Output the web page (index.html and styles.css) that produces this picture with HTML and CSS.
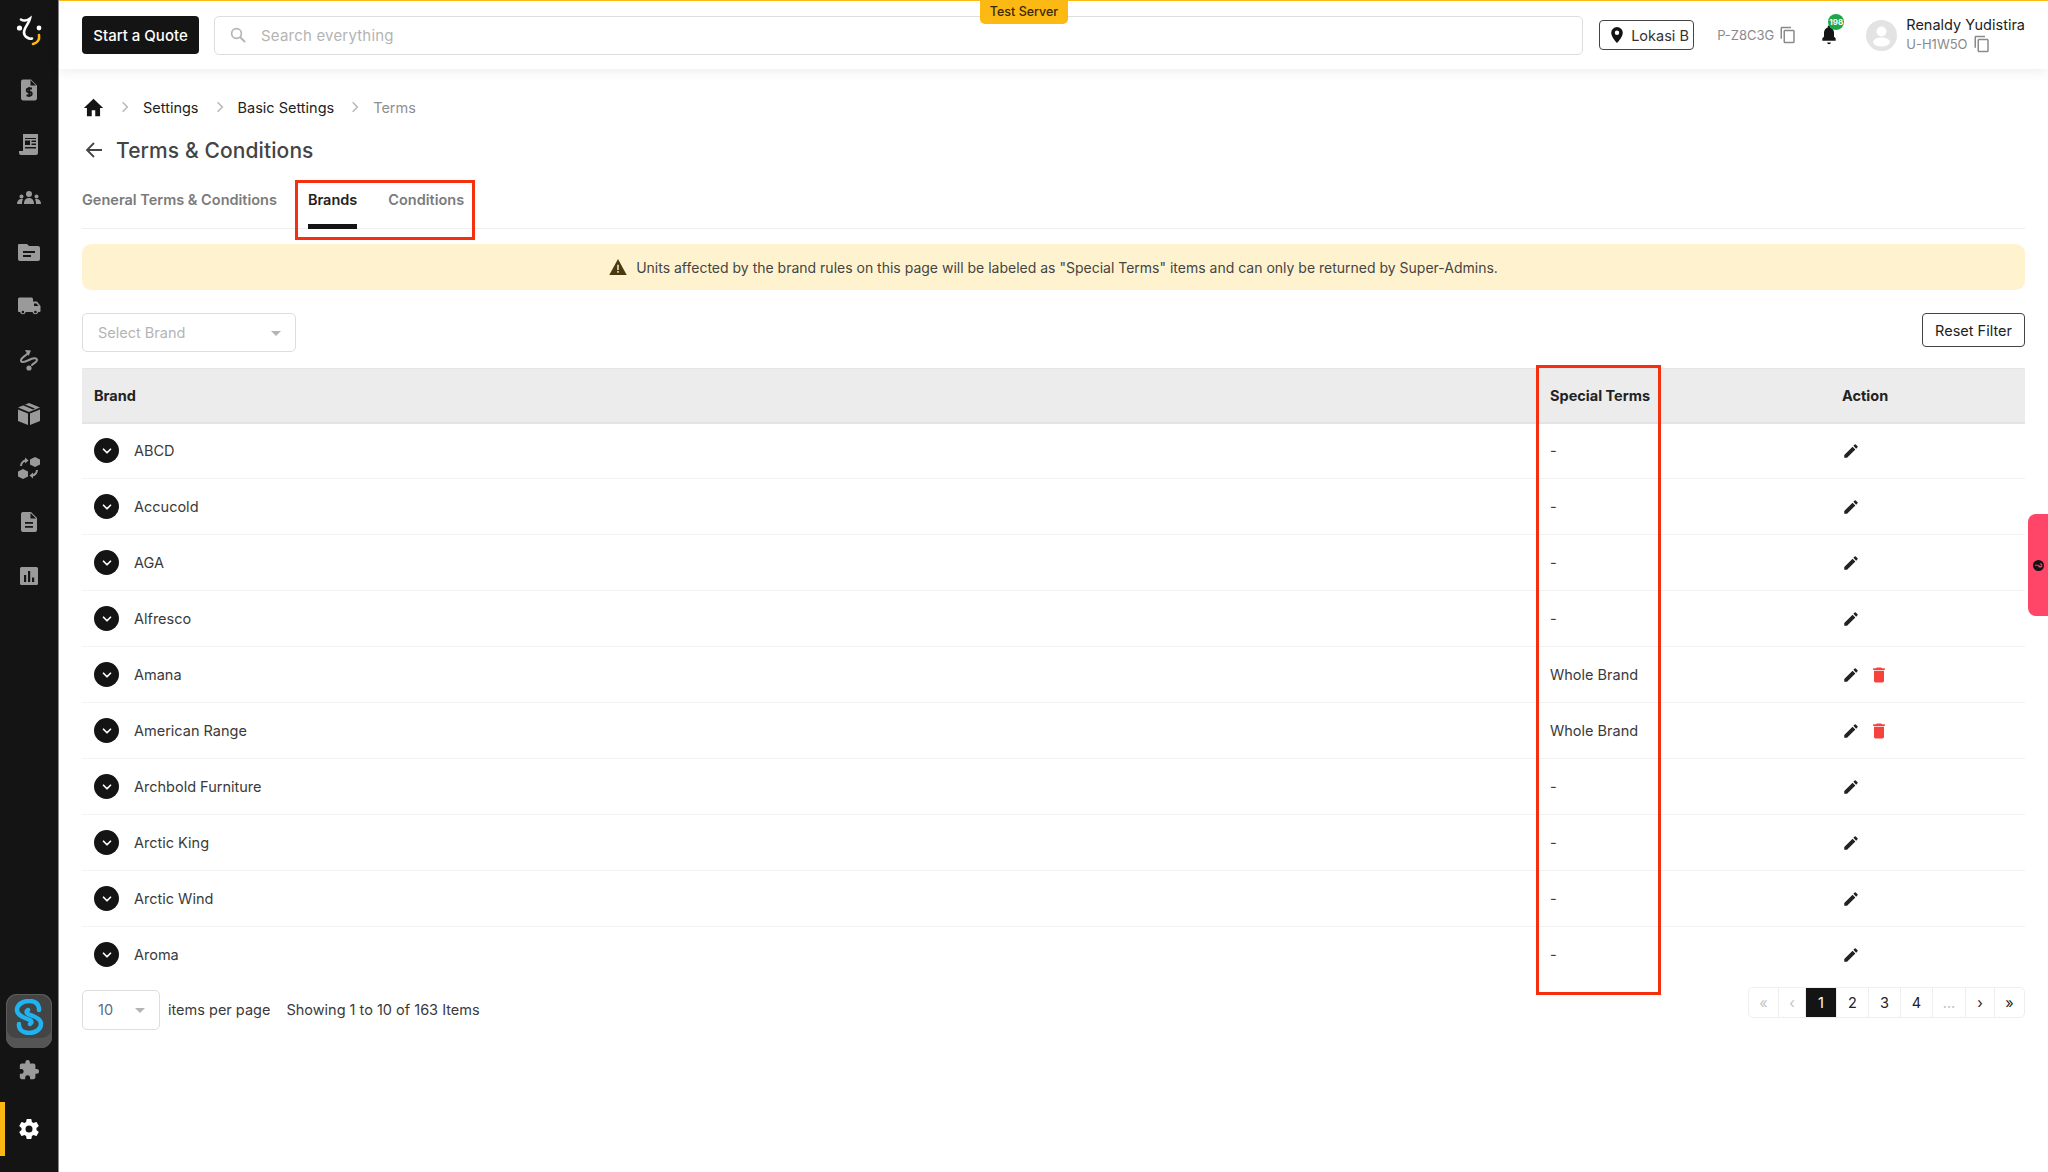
FILE: index.html
```html
<!DOCTYPE html>
<html lang="en">
<head>
    <meta charset="UTF-8">
    <meta name="viewport" content="width=device-width, initial-scale=1.0">
    <title>Terms &amp; Conditions</title>
    <link rel="stylesheet" href="styles.css">
</head>
<body>
    <svg class="sprites" width="0" height="0">
        <symbol id="i-copy" viewBox="0 0 24 24"><path fill="currentColor" d="M16 1H4c-1.1 0-2 .9-2 2v14h2V3h12V1zm3 4H8c-1.1 0-2 .9-2 2v14c0 1.1.9 2 2 2h11c1.1 0 2-.9 2-2V7c0-1.1-.9-2-2-2zm0 16H8V7h11v14z"/></symbol>
        <symbol id="i-pencil" viewBox="0 0 24 24"><path fill="currentColor" d="M3 17.25V21h3.75L17.81 9.94l-3.75-3.75L3 17.25zM20.71 7.04a1 1 0 0 0 0-1.41l-2.34-2.34a1 1 0 0 0-1.41 0l-1.83 1.83 3.75 3.75 1.83-1.83z"/></symbol>
        <symbol id="i-trash" viewBox="0 0 24 24"><path fill="currentColor" d="M6 19c0 1.1.9 2 2 2h8c1.1 0 2-.9 2-2V7H6v12zM19 4h-3.5l-1-1h-5l-1 1H5v2h14V4z"/></symbol>
        <symbol id="i-chev" viewBox="0 0 24 24"><path fill="none" stroke="currentColor" stroke-width="3" stroke-linecap="round" stroke-linejoin="round" d="M6 9l6 6 6-6"/></symbol>
        <symbol id="i-crumb" viewBox="0 0 24 24"><path fill="none" stroke="currentColor" stroke-width="2.4" d="M8 4l8 8-8 8"/></symbol>
    </svg>

    <div class="app">
        <!-- Sidebar -->
        <aside class="sidebar">
            <div class="side-top">
                <div class="side-item logo">
                    <svg width="28" height="34" viewBox="0 0 28 34">
                        <circle cx="4.5" cy="13" r="2.6" fill="#fff"/>
                        <circle cx="24" cy="13" r="2.4" fill="#fff"/>
                        <path d="M6 4.5c3 2 7 .5 9-1-1 5-6 9-6 14 0 4 5 7 8 6" fill="none" stroke="#fff" stroke-width="2.6" stroke-linecap="round"/>
                        <path d="M24 20c1 5-2 8-6 9" fill="none" stroke="#fdb913" stroke-width="2.6" stroke-linecap="round"/>
                    </svg>
                </div>
                <div class="side-item"><svg width="24" height="24" viewBox="0 0 24 24"><path fill="#9a9a9a" d="M6 1.5h8l6 6V20a2.5 2.5 0 0 1-2.5 2.5h-11A2.500 2.500 0 0 1 4 20V3.500a2 2 0 0 1 2-2z"/><path fill="none" stroke="#141414" stroke-width="1.8" d="M15 10.500h-3.500a1.700 1.700 0 0 0 0 3.500h1.500a1.700 1.700 0 0 1 0 3.500H9.500M12.200 9v10"/><path fill="#141414" d="M13.500 2l5.500 5.500h-5.500z"/></svg></div>
                <div class="side-item"><svg width="24" height="24" viewBox="0 0 24 24"><path fill="#9a9a9a" d="M6 2h15v19a2 2 0 0 1-2 2H4a2 2 0 0 1-2-2v-2h4z"/><path fill="#141414" d="M8 6h11v1H8zM8 8.500h5V13H8zM14.500 8.500H19V10h-4.500zM14.500 11.500H19V13h-4.500zM8 15h11v1.500H8z"/></svg></div>
                <div class="side-item"><svg width="24" height="24" viewBox="0 0 24 24"><g fill="#9a9a9a"><circle cx="12" cy="8" r="3"/><circle cx="4.500" cy="10.500" r="2"/><circle cx="19.500" cy="10.500" r="2"/><path d="M7 18c0-4 2-6 5-6s5 2 5 6zM0 18c0-3 1.500-5 4.500-5 .8 0 1 .1 1.500.3C5.300 14.500 5 16 5 18zM24 18c0-3-1.500-5-4.500-5-.8 0-1 .1-1.500.3.700 1.200 1 2.700 1 4.700z"/></g></svg></div>
                <div class="side-item"><svg width="24" height="24" viewBox="0 0 24 24"><path fill="#9a9a9a" d="M2 4h8l2 2h9a2 2 0 0 1 2 2v11a2 2 0 0 1-2 2H3a2 2 0 0 1-2-2V5a1 1 0 0 1 1-1z"/><path fill="#141414" d="M6 11h12v2H6zM6 15h8v2H6z"/></svg></div>
                <div class="side-item"><svg width="24" height="24" viewBox="0 0 24 24"><path fill="#9a9a9a" d="M1 5a1.500 1.500 0 0 1 1.500-1.500h12A1.500 1.500 0 0 1 16 5v2.500h4l3.500 4.500v5a1 1 0 0 1-1 1h-1.200a3 3 0 0 1-5.800 0H8.800a3 3 0 0 1-5.800 0H2a1 1 0 0 1-1-1z"/><circle cx="5.900" cy="18" r="1.300" fill="#141414"/><circle cx="18.400" cy="18" r="1.300" fill="#141414"/><path fill="#141414" d="M17 9.500h2.500l2 2.500H17z"/></svg></div>
                <div class="side-item"><svg width="24" height="24" viewBox="0 0 24 24"><circle cx="12" cy="20" r="2.600" fill="#9a9a9a"/><path fill="none" stroke="#9a9a9a" stroke-width="2" stroke-linecap="round" d="M11 5c-2 3-8 5-7 8 1 2 5 .5 8-1s8-3 8 0c0 2-3 3-5 5"/><path fill="#9a9a9a" d="M8 2l6 .5-2.500 5.500z"/></svg></div>
                <div class="side-item"><svg width="24" height="24" viewBox="0 0 24 24"><path fill="#9a9a9a" d="M12 1l11 4.500-11 4.500L1 5.500zM1 7.500l10 4V23L1 19zM13 11.500l10-4V19l-10 4z"/><path fill="#141414" d="M6 3.200l10 4.300 2-.9L8 2.400z"/></svg></div>
                <div class="side-item"><svg width="24" height="24" viewBox="0 0 24 24"><g fill="#9a9a9a"><path d="M18 1l5 2.500v5L18 11l-5-2.500v-5zM6 13l5 2.500v5L6 23l-5-2.500v-5z"/><path d="M3 10c.3-3.500 2.500-6 5-6.500V1.500l3.500 3-3.500 3V5.800C6.500 6.300 5 8 5 10zM21 14c-.3 3.500-2.500 6-5 6.500v2l-3.500-3 3.500-3v1.700c1.500-.5 3-2.200 3-4.200z"/></g></svg></div>
                <div class="side-item"><svg width="24" height="24" viewBox="0 0 24 24"><path fill="#9a9a9a" d="M6 2h8l6 6v12a2 2 0 0 1-2 2H6a2 2 0 0 1-2-2V4a2 2 0 0 1 2-2z"/><path fill="#141414" d="M8 12h8v1.800H8zM8 16h8v1.800H8zM13.500 3l5.500 5.500h-5.500z"/></svg></div>
                <div class="side-item"><svg width="24" height="24" viewBox="0 0 24 24"><rect x="3" y="3" width="18" height="18" rx="1.500" fill="#9a9a9a"/><path fill="#141414" d="M7 11h2.200v7H7zM11 7h2.200v11H11zM15 13.500h2.200V18H15z"/></svg></div>
            </div>
            <div class="side-bottom">
                <div class="app-key">
                    <svg width="34" height="36" viewBox="0 0 34 36">
                        <path d="M27 11V9C26 3 21 2 17 2 10 2 5 6 5 11c0 4 3 6 8 8l5 2c2 1 2 3 0 4" fill="none" stroke="#1fb4f0" stroke-width="4.500" stroke-linecap="round"/>
                        <path d="M7 25v2c1 5 6 7 10 7 7 0 12-4 12-9 0-4-3-6-8-8l-5-2c-2-1-2-3 0-4" fill="none" stroke="#1fb4f0" stroke-width="4.500" stroke-linecap="round"/>
                    </svg>
                </div>
                <div class="side-item plug"><svg width="22" height="22" viewBox="0 0 24 24"><path fill="#9a9a9a" d="M20.500 11H19V7a2 2 0 0 0-2-2h-4V3.500a2.500 2.500 0 0 0-5 0V5H4a2 2 0 0 0-2 2v3.800h1.500a2.700 2.700 0 0 1 0 5.400H2V20a2 2 0 0 0 2 2h3.800v-1.500a2.700 2.700 0 0 1 5.400 0V22H17a2 2 0 0 0 2-2v-4h1.500a2.500 2.500 0 0 0 0-5z"/></svg></div>
                <div class="side-item active"><svg width="24" height="24" viewBox="0 0 24 24"><path fill="#fff" d="M19.430 12.980c.04-.32.070-.64.070-.98s-.03-.66-.07-.98l2.110-1.650a.5.500 0 0 0 .12-.64l-2-3.460a.5.500 0 0 0-.61-.22l-2.490 1a7.300 7.300 0 0 0-1.690-.98l-.38-2.650A.49.49 0 0 0 14 2h-4a.49.49 0 0 0-.49.420l-.38 2.650c-.61.250-1.170.590-1.690.98l-2.490-1a.5.500 0 0 0-.61.220l-2 3.460a.49.490 0 0 0 .12.640l2.110 1.650c-.04.320-.07.650-.07.980s.03.660.07.980l-2.110 1.650a.5.500 0 0 0-.12.640l2 3.460c.12.220.39.300.61.220l2.490-1c.52.400 1.080.730 1.690.98l.38 2.650c.03.240.24.420.49.420h4c.25 0 .46-.18.49-.42l.38-2.650c.61-.25 1.170-.59 1.690-.98l2.490 1c.23.090.49 0 .61-.22l2-3.460a.5.500 0 0 0-.12-.64l-2.110-1.650zM12 15.500a3.500 3.500 0 1 1 0-7 3.500 3.500 0 0 1 0 7z"/></svg></div>
            </div>
        </aside>

        <div class="main">
            <!-- Top bar -->
            <header class="topbar">
                <button class="btn-dark">Start a Quote</button>
                <div class="search">
                    <svg width="18" height="18" viewBox="0 0 24 24"><circle cx="10" cy="10" r="6.500" fill="none" stroke="#b4b4b4" stroke-width="2.200"/><path d="M15 15l6.500 6.500" stroke="#b4b4b4" stroke-width="2.600"/></svg>
                    <span>Search everything</span>
                </div>
                <button class="btn-location">
                    <svg width="14" height="16" viewBox="0 0 14 18"><path fill="#141414" d="M7 0a6.500 6.500 0 0 0-6.500 6.500C.5 11.400 7 18 7 18s6.500-6.600 6.500-11.500A6.500 6.500 0 0 0 7 0zm0 9a2.500 2.500 0 1 1 0-5 2.500 2.500 0 0 1 0 5z"/></svg>
                    Lokasi B
                </button>
                <div class="store-code">P-Z8C3G <svg class="copy" width="18" height="18"><use href="#i-copy"/></svg></div>
                <div class="bell">
                    <svg width="20" height="20" viewBox="0 0 24 24"><path fill="#141414" d="M12 23a2.500 2.500 0 0 0 2.400-2h-4.800a2.500 2.500 0 0 0 2.400 2zm8-6v-1l-2-2V9.500c0-3.200-1.700-5.900-4.500-6.500V2a1.500 1.500 0 0 0-3 0v1C7.700 3.600 6 6.300 6 9.500V14l-2 2v3h16z"/></svg>
                    <span class="bell-count">198</span>
                </div>
                <div class="avatar"><svg width="31" height="31" viewBox="0 0 31 31"><circle cx="15.500" cy="15.500" r="15.500" fill="#e3e3e3"/><circle cx="15.500" cy="11.500" r="5" fill="#fff"/><ellipse cx="15.500" cy="22" rx="8.500" ry="4.500" fill="#fff"/></svg></div>
                <div class="user">
                    <div class="user-name">Renaldy Yudistira</div>
                    <div class="user-id">U-H1W5O <svg class="copy" width="18" height="18"><use href="#i-copy"/></svg></div>
                </div>
            </header>
            <div class="test-badge">Test Server</div>

            <main class="content">
                <nav class="breadcrumb">
                    <svg class="home" width="21" height="21" viewBox="0 0 24 24"><path fill="#141414" d="M10 22v-7h4v7h5.500v-9.500H23L12 2 1 12.500h3.500V22z"/></svg>
                    <svg class="crumb-sep" width="14" height="14"><use href="#i-crumb"/></svg>
                    <a>Settings</a>
                    <svg class="crumb-sep" width="14" height="14"><use href="#i-crumb"/></svg>
                    <a>Basic Settings</a>
                    <svg class="crumb-sep" width="14" height="14"><use href="#i-crumb"/></svg>
                    <span class="crumb-current">Terms</span>
                </nav>

                <div class="page-title">
                    <svg width="20" height="20" viewBox="0 0 20 20"><path d="M18 10H3M10 3l-7 7 7 7" fill="none" stroke="#444" stroke-width="1.800"/></svg>
                    <h1>Terms &amp; Conditions</h1>
                </div>

                <div class="tabs">
                    <div class="tab">General Terms &amp; Conditions</div>
                    <div class="tab active">Brands</div>
                    <div class="tab">Conditions</div>
                    <div class="red-box tabs-box"></div>
                </div>

                <div class="notice">
                    <svg width="18" height="16" viewBox="0 0 24 22"><path fill="#4a3a10" d="M12 0L0 22h24z"/><path fill="#fff4cf" d="M11 8h2v7h-2zM11 16.500h2v2.500h-2z"/></svg>
                    Units affected by the brand rules on this page will be labeled as "Special Terms" items and can only be returned by Super-Admins.
                </div>

                <div class="filters">
                    <div class="select brand-select">Select Brand <i class="caret"></i></div>
                    <button class="btn-outline">Reset Filter</button>
                </div>

                <div class="table-wrap">
                    <table class="brand-table">
                        <thead>
                            <tr><th>Brand</th><th>Special Terms</th><th>Action</th></tr>
                        </thead>
                        <tbody id="rows"></tbody>
                    </table>
                    <div class="red-box col-box"></div>
                </div>

                <div class="table-foot">
                    <div class="per-page">
                        <div class="select size-select">10 <i class="caret"></i></div>
                        <span>items per page</span>
                        <span class="showing">Showing 1 to 10 of 163 Items</span>
                    </div>
                    <ul class="pager">
                        <li class="off wide1">«</li>
                        <li class="off wide2">‹</li>
                        <li class="current">1</li>
                        <li>2</li>
                        <li>3</li>
                        <li>4</li>
                        <li class="off dots">...</li>
                        <li class="arrow">›</li>
                        <li class="arrow">»</li>
                    </ul>
                </div>
            </main>
        </div>
    </div>

    <div class="help-tab"><span>?</span></div>

    <script>
        const brands = [
            ['ABCD', '-'], ['Accucold', '-'], ['AGA', '-'], ['Alfresco', '-'],
            ['Amana', 'Whole Brand'], ['American Range', 'Whole Brand'],
            ['Archbold Furniture', '-'], ['Arctic King', '-'], ['Arctic Wind', '-'], ['Aroma', '-']
        ];
        const rows = document.getElementById('rows');

        brands.forEach(([name, terms]) => {
            const trash = terms === '-' ? '' : '<svg class="trash" width="20" height="20"><use href="#i-trash"/></svg>';
            const row = document.createElement('tr');
            row.innerHTML = `
                <td><div class="brand-cell"><span class="expand"><svg width="14" height="14"><use href="#i-chev"/></svg></span>${name}</div></td>
                <td>${terms}</td>
                <td><div class="actions"><svg class="pencil" width="18" height="18"><use href="#i-pencil"/></svg>${trash}</div></td>`;
            rows.appendChild(row);
        });
    </script>
</body>
</html>
```

FILE: styles.css
```css
* {
    box-sizing: border-box;
}

body {
    margin: 0;
    background: #fff;
    color: #2b2b2b;
    font-family: "Inter", "Open Sans", sans-serif;
    font-size: 15px;
}

.sprites {
    position: absolute;
}

.app {
    display: flex;
    min-height: 1172px;
}

/* Sidebar */
.sidebar {
    width: 59px;
    flex-shrink: 0;
    background: #141414;
    border-right: 1px solid #8a8a8a;
    display: flex;
    flex-direction: column;
    justify-content: space-between;
    padding-top: 9px;
    padding-bottom: 16px;
}

.side-item {
    height: 54px;
    display: flex;
    align-items: center;
    justify-content: center;
}

.side-item.logo {
    height: 46px;
    margin-bottom: 8px;
}

.side-bottom {
    display: flex;
    flex-direction: column;
    align-items: center;
}

.app-key {
    width: 46px;
    height: 54px;
    margin-right: 1px;
    background: #444;
    border-radius: 11px;
    box-shadow: inset 0 -10px 0 #555, inset 0 0 0 1px #5c5c5c;
    display: flex;
    align-items: center;
    justify-content: center;
    padding-bottom: 8px;
}

.side-item.plug {
    height: 44px;
    width: 100%;
}

.side-item.active {
    width: 100%;
    height: 54px;
    margin-top: 10px;
    border-left: 5px solid #fdb913;
    padding-right: 5px;
}

/* Top bar */
.main {
    flex: 1;
    min-width: 0;
    position: relative;
}

.topbar {
    height: 69px;
    display: flex;
    align-items: center;
    padding: 0 23px;
    border-top: 1px solid #fdb913;
    box-shadow: 0 2px 12px rgba(0, 0, 0, 0.08);
    color: #141414;
}

.btn-dark {
    width: 117px;
    height: 38px;
    flex-shrink: 0;
    background: #141414;
    color: #fff;
    border: none;
    border-radius: 4px;
    font: 500 15px "Inter", sans-serif;
}

.search {
    flex: 1;
    height: 39px;
    margin-left: 15px;
    border: 1px solid #ddd;
    border-radius: 5px;
    display: flex;
    align-items: center;
    gap: 14px;
    padding-left: 14px;
    color: #b4b4b4;
    font-size: 15px;
    letter-spacing: 0.2px;
}

.btn-location {
    width: 95px;
    height: 30px;
    margin-left: 16px;
    flex-shrink: 0;
    background: #fff;
    border: 1px solid #444;
    border-radius: 4px;
    display: flex;
    align-items: center;
    gap: 7px;
    padding: 0 0 0 10px;
    font: 400 14.500px "Inter", sans-serif;
    color: #333;
}

.store-code {
    margin-left: 23px;
    display: flex;
    align-items: center;
    gap: 5px;
    color: #8a8a8a;
    font-size: 13px;
}

.copy {
    color: #8a8a8a;
}

.bell {
    position: relative;
    margin-left: 22px;
    width: 24px;
    height: 24px;
    display: flex;
    align-items: center;
}

.bell-count {
    position: absolute;
    top: -9px;
    left: 9px;
    width: 16px;
    height: 16px;
    border-radius: 50%;
    background: #1fa64a;
    color: #fff;
    font-size: 8px;
    font-weight: 700;
    line-height: 16px;
    text-align: center;
}

.avatar {
    margin-left: 23px;
    height: 31px;
}

.user {
    margin-left: 9px;
    white-space: nowrap;
}

.user-name {
    font-size: 14.500px;
    line-height: 18px;
    color: #222;
}

.user-id {
    display: flex;
    align-items: center;
    gap: 5px;
    height: 20px;
    color: #8a8a8a;
    font-size: 13px;
}

.test-badge {
    position: absolute;
    top: 0;
    left: 921px;
    width: 88px;
    height: 24px;
    background: #fdb913;
    color: #3a2a00;
    border-radius: 0 0 5px 5px;
    font-size: 12.500px;
    line-height: 24px;
    font-weight: 500;
    text-align: center;
}

/* Page content */
.content {
    padding: 26px 23px 0;
}

.breadcrumb {
    height: 24px;
    display: flex;
    align-items: center;
    color: #222;
    font-size: 14.500px;
}

.home {
    margin-left: 1px;
}

.crumb-sep {
    color: #b5b5b5;
    margin: 0 11px 0 14px;
}

.breadcrumb .crumb-sep:first-of-type {
    margin-left: 16px;
}

.crumb-current {
    color: #8f8f8f;
}

.page-title {
    display: flex;
    align-items: center;
    gap: 12px;
    margin-top: 15px;
    height: 32px;
    padding-left: 2px;
}

.page-title h1 {
    margin: 0;
    font-size: 21px;
    font-weight: 500;
    color: #444;
    letter-spacing: 0.1px;
}

.tabs {
    position: relative;
    display: flex;
    margin-top: 15px;
    height: 48px;
    border-bottom: 1px solid #eee;
}

.tab {
    padding-top: 10px;
    margin-right: 31px;
    color: #7b7b7b;
    font-size: 14.500px;
    font-weight: 600;
    white-space: nowrap;
}

.tab.active {
    color: #222;
    border-bottom: 5px solid #141414;
    height: 48px;
}

.red-box {
    position: absolute;
    border: 3px solid #f5300f;
    pointer-events: none;
}

.tabs-box {
    left: 213px;
    top: -1px;
    width: 180px;
    height: 60px;
}

.notice {
    height: 46px;
    margin-top: 15px;
    background: #fff3cf;
    border-radius: 9px;
    display: flex;
    align-items: center;
    justify-content: center;
    gap: 9px;
    color: #444;
    font-size: 14px;
}

.filters {
    margin-top: 23px;
    height: 55px;
    display: flex;
    align-items: flex-start;
    justify-content: space-between;
}

.select {
    position: relative;
    border: 1px solid #ddd;
    border-radius: 5px;
    display: flex;
    align-items: center;
    color: #b4b4b4;
    font-size: 14.500px;
}

.brand-select {
    width: 214px;
    height: 39px;
    padding-left: 15px;
}

.size-select {
    width: 78px;
    height: 40px;
    padding-left: 15px;
    color: #5b6b85;
}

.caret {
    position: absolute;
    right: 14px;
    top: 50%;
    margin-top: -2px;
    border: 5px solid transparent;
    border-top: 5px solid #b4b4b4;
    border-bottom: none;
}

.btn-outline {
    width: 103px;
    height: 34px;
    background: #fff;
    border: 1px solid #444;
    border-radius: 4px;
    color: #222;
    font: 400 14.500px "Inter", sans-serif;
}

/* Table */
.table-wrap {
    position: relative;
}

.brand-table {
    width: 100%;
    border-collapse: collapse;
    table-layout: fixed;
}

.brand-table th {
    height: 54px;
    padding: 0 12px;
    background: #ececec;
    border-top: 1px solid #e6e6e6;
    border-bottom: 2px solid #e4e4e8;
    text-align: left;
    font-size: 14.500px;
    font-weight: 700;
    color: #222;
}

.brand-table th:nth-child(1) {
    width: 1456px;
}

.brand-table th:nth-child(2) {
    width: 292px;
}

.brand-table td {
    height: 56px;
    padding: 0 12px;
    border-bottom: 1px solid #f3f3f3;
    font-size: 14.500px;
    color: #3a3a3a;
}

.brand-table tr:last-child td {
    border-bottom: none;
}

.brand-cell {
    display: flex;
    align-items: center;
    gap: 15px;
}

.expand {
    width: 25px;
    height: 25px;
    border-radius: 50%;
    background: #141414;
    color: #fff;
    display: flex;
    align-items: center;
    justify-content: center;
}

.actions {
    display: flex;
    align-items: center;
    gap: 9px;
}

.pencil {
    color: #222;
}

.trash {
    color: #f5423d;
}

.col-box {
    left: 1454px;
    top: -3px;
    width: 125px;
    height: 630px;
}

.table-foot {
    display: flex;
    justify-content: space-between;
    align-items: flex-start;
    margin-top: 4px;
}

.per-page {
    display: flex;
    align-items: center;
    margin-top: 3px;
    color: #3a3a3a;
    font-size: 14.500px;
}

.per-page > span {
    margin-left: 8px;
}

.per-page .showing {
    margin-left: 16px;
}

/* Pagination */
.pager {
    list-style: none;
    margin: 0;
    padding: 0;
    height: 31px;
    display: flex;
    border: 1px solid #eee;
    border-radius: 5px;
    overflow: hidden;
    color: #222;
    font-size: 14.500px;
}

.pager li {
    width: 32px;
    display: flex;
    align-items: center;
    justify-content: center;
    border-right: 1px solid #eee;
}

.pager li:last-child {
    border-right: none;
}

.pager li.wide1 {
    width: 30px;
}

.pager li.wide2 {
    width: 27px;
}

.pager li.current {
    width: 31px;
    background: #141414;
    color: #fff;
}

.pager li.dots {
    width: 33px;
}

.pager li.arrow {
    width: 29px;
}

.pager li.off {
    color: #c4c4c4;
}

/* Help tab on the right edge */
.help-tab {
    position: absolute;
    right: 0;
    top: 514px;
    width: 20px;
    height: 102px;
    background: #ff4568;
    border-radius: 8px 0 0 8px;
    display: flex;
    align-items: center;
    justify-content: center;
}

.help-tab span {
    width: 11px;
    height: 11px;
    border-radius: 50%;
    background: #141414;
    color: #ff4568;
    font-size: 9px;
    font-weight: 700;
    line-height: 11px;
    text-align: center;
    transform: rotate(90deg);
}
```
